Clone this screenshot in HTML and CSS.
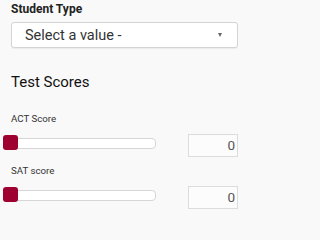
FILE: index.html
```html
<!DOCTYPE html>
<html>
<head>
<meta charset="utf-8">
<link rel="stylesheet" href="styles.css">
</head>
<body>
<div class="panel">
  <div class="field-label">Student Type</div>
  <div class="select">
    <span class="select-text">Select a value -</span>
    <span class="caret"></span>
  </div>
  <h2 class="section-title">Test Scores</h2>
  <div class="score-label">ACT Score</div>
  <div class="score-row">
    <div class="slider"><span class="thumb"></span></div>
    <div class="num">0</div>
  </div>
  <div class="score-label second">SAT score</div>
  <div class="score-row">
    <div class="slider"><span class="thumb"></span></div>
    <div class="num">0</div>
  </div>
</div>
</body>
</html>
```
FILE: styles.css
```css
html, body {
  margin: 0;
  padding: 0;
  background: #f9f9f9;
}
body {
  font-family: Roboto, "Liberation Sans", sans-serif;
  color: #222;
}
.panel {
  box-sizing: border-box;
  width: 250px;
  padding: 2px 12px 0 11px;
}
.field-label {
  font-weight: bold;
  font-size: 12px;
  line-height: 15px;
  color: #222;
}
.select {
  margin-top: 5px;
  height: 24px;
  border: 1px solid #d4d4d4;
  border-radius: 3px;
  background: #fff;
  box-shadow: 0 1px 1px rgba(0,0,0,0.06);
  display: flex;
  align-items: center;
  justify-content: space-between;
  padding: 0 15px 0 13px;
}
.select-text {
  font-size: 14.5px;
  color: #333;
}
.caret {
  width: 0;
  height: 0;
  border-left: 2.5px solid transparent;
  border-right: 2.5px solid transparent;
  border-top: 4px solid #666;
}
.section-title {
  margin: 25px 0 0 0;
  font-weight: normal;
  font-size: 15px;
  line-height: 18px;
  color: #111;
}
.score-label {
  margin-top: 21px;
  font-size: 9.7px;
  line-height: 13px;
  color: #333;
}
.score-label.second {
  margin-top: 7px;
}
.score-row {
  display: flex;
  align-items: flex-start;
  justify-content: space-between;
  margin-left: -8px;
  margin-top: 9px;
}
.slider {
  position: relative;
  margin-top: 4px;
  width: 151px;
  height: 9px;
  border: 1px solid #d6d6d6;
  border-radius: 4px;
  background: #fff;
}
.thumb {
  position: absolute;
  left: -1px;
  top: -4px;
  width: 15px;
  height: 15px;
  border-radius: 3px;
  background: #9e0030;
}
.num {
  width: 46px;
  height: 21px;
  border: 1px solid #dcdcdc;
  background: #fcfcfc;
  font-size: 13.5px;
  color: #555;
  text-align: right;
  line-height: 21px;
  padding-right: 2px;
}
```
